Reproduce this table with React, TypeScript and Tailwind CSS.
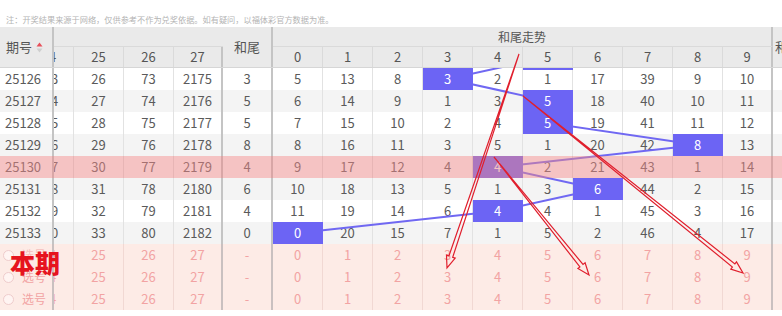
import React from 'react'

type Row = { id: string; p: string; a: number; b: number; c: number; t: number; d: number[]; hit: number }

const rows: Row[] = [
  { id: '25126', p: '3', a: 26, b: 73, c: 2175, t: 3, d: [5, 13, 8, 3, 2, 1, 17, 39, 9, 10], hit: 3 },
  { id: '25127', p: '4', a: 27, b: 74, c: 2176, t: 5, d: [6, 14, 9, 1, 3, 5, 18, 40, 10, 11], hit: 5 },
  { id: '25128', p: '5', a: 28, b: 75, c: 2177, t: 5, d: [7, 15, 10, 2, 4, 5, 19, 41, 11, 12], hit: 5 },
  { id: '25129', p: '6', a: 29, b: 76, c: 2178, t: 8, d: [8, 16, 11, 3, 5, 1, 20, 42, 8, 13], hit: 8 },
  { id: '25130', p: '7', a: 30, b: 77, c: 2179, t: 4, d: [9, 17, 12, 4, 4, 2, 21, 43, 1, 14], hit: 4 },
  { id: '25131', p: '8', a: 31, b: 78, c: 2180, t: 6, d: [10, 18, 13, 5, 1, 3, 6, 44, 2, 15], hit: 6 },
  { id: '25132', p: '9', a: 32, b: 79, c: 2181, t: 4, d: [11, 19, 14, 6, 4, 4, 1, 45, 3, 16], hit: 4 },
  { id: '25133', p: '0', a: 33, b: 80, c: 2182, t: 0, d: [0, 20, 15, 7, 1, 5, 2, 46, 4, 17], hit: 0 },
]

const digits = [0, 1, 2, 3, 4, 5, 6, 7, 8, 9]

// trend line: previous draw (hidden under header) then each hit cell centre
const trend = [[548, -11], ...rows.map((r, i) => [298 + r.hit * 50, 11 + i * 22])]
  .map(([x, y]) => `${x},${y}`)
  .join(' ')

// hand-drawn annotation arrows, page coordinates
function arrowPts(sx: number, sy: number, tx: number, ty: number) {
  const dx = tx - sx
  const dy = ty - sy
  const len = Math.hypot(dx, dy)
  const ux = dx / len
  const uy = dy / len
  const nx = -uy
  const ny = ux
  const L = 12
  const H = 4.6
  const h = 2
  const bx = tx - ux * L
  const by = ty - uy * L
  const p = [
    [sx, sy],
    [bx + nx * h, by + ny * h],
    [bx + nx * H, by + ny * H],
    [tx, ty],
    [bx - nx * H, by - ny * H],
    [bx - nx * h, by - ny * h],
  ]
  return p.map(([x, y]) => `${x.toFixed(1)},${y.toFixed(1)}`).join(' ')
}

const arrows = [
  [519, 54, 447, 268],
  [494, 157, 589, 275],
  [523, 96, 743, 273],
]

const cell = 'w-[50px] shrink-0 border-r flex items-center justify-center'

function DataRow({ r, i }: { r: Row; i: number }) {
  const bg = i % 2 === 0 ? 'bg-white' : 'bg-[#f4f4f4]'
  return (
    <div className={`flex h-[22px] ${bg} text-[13px] text-[#5a5a5a]`}>
      <div className="w-[54px] shrink-0 border-r-2 border-[#c4c4c4] pl-[5px] flex items-center">{r.id}</div>
      <div className="w-[20px] shrink-0 border-r border-[#e2e2e2] overflow-hidden flex items-center">
        <span className="-ml-[3px]">{r.p}</span>
      </div>
      <div className={`${cell} border-[#e2e2e2]`}>{r.a}</div>
      <div className={`${cell} border-[#e2e2e2]`}>{r.b}</div>
      <div className="w-[49px] shrink-0 border-r-2 border-[#c4c4c4] flex items-center justify-center">{r.c}</div>
      <div className="w-[50px] shrink-0 border-r-2 border-[#c4c4c4] flex items-center justify-center">{r.t}</div>
      {r.d.map((v, k) =>
        k === r.hit ? (
          <div key={k} className={`${cell} relative z-20 bg-[#6c64f4] border-[#6c64f4] text-white`}>
            {v}
          </div>
        ) : (
          <div key={k} className={`${cell} ${k === 9 ? 'border-r-2 border-[#c4c4c4]' : 'border-[#e2e2e2]'}`}>
            {v}
          </div>
        )
      )}
      <div className="w-[40px] shrink-0" />
    </div>
  )
}

function PickRow({ hideLabel }: { hideLabel?: boolean }) {
  return (
    <div className="flex h-[22px] bg-[#fdebe6] text-[13px] text-[#f2a3a3]">
      <div className="w-[54px] shrink-0 border-r-2 border-[#c9c0c0] pl-[3px] flex items-center gap-[8px]">
        <span className="w-[11px] h-[11px] rounded-full border border-[#efcccc] bg-[#fff4f2]" />
        <span className={`text-[12px] ${hideLabel ? 'opacity-60' : ''}`}>选号</span>
      </div>
      <div className="w-[20px] shrink-0 border-r border-[#f1d8d3] overflow-hidden flex items-center">
        <span className="-ml-[5px]">4</span>
      </div>
      <div className={`${cell} border-[#f1d8d3]`}>25</div>
      <div className={`${cell} border-[#f1d8d3]`}>26</div>
      <div className="w-[49px] shrink-0 border-r-2 border-[#c9c0c0] flex items-center justify-center">27</div>
      <div className="w-[50px] shrink-0 border-r-2 border-[#c9c0c0] flex items-center justify-center">-</div>
      {digits.map(k => (
        <div key={k} className={`${cell} ${k === 9 ? 'border-r-2 border-[#c9c0c0]' : 'border-[#f1d8d3]'}`}>
          {k}
        </div>
      ))}
      <div className="w-[40px] shrink-0" />
    </div>
  )
}

export default function App() {
  return (
    <div className="relative w-[782px] h-[316px] overflow-hidden bg-white font-['Noto_Sans_CJK_SC','Noto_Sans',sans-serif]">
      <div className="h-[27px] pt-[14px] pl-[6px] text-[8.2px] leading-[10px] text-[#b4b4b4] whitespace-nowrap">
        注：开奖结果来源于网络，仅供参考不作为兑奖依据。如有疑问，以福体彩官方数据为准。
      </div>

      {/* header */}
      <div className="flex h-[41px] bg-[#eaeaea] border-b border-[#d6d6d6] text-[13px] text-[#555]">
        <div className="w-[54px] shrink-0 border-r-2 border-[#c4c4c4] pl-[6px] flex items-center gap-[4px]">
          期号
          <svg width="7" height="11" viewBox="0 0 7 11">
            <path d="M3.5 0.5 L6.5 4.5 L0.5 4.5 Z" fill="#e8505a" />
            <path d="M3.5 10.5 L6.5 6.5 L0.5 6.5 Z" fill="#cfcfcf" />
          </svg>
        </div>
        <div className="flex flex-col shrink-0">
          <div className="h-[20px] border-b border-[#dadada]" />
          <div className="flex flex-1">
            <div className="w-[20px] shrink-0 border-r border-[#dadada] overflow-hidden flex items-center">
              <span className="-ml-[5px]">4</span>
            </div>
            <div className={`${cell} border-[#dadada]`}>25</div>
            <div className={`${cell} border-[#dadada]`}>26</div>
            <div className="w-[49px] shrink-0 border-r-2 border-[#c4c4c4] flex items-center justify-center">27</div>
          </div>
        </div>
        <div className="w-[50px] shrink-0 border-r-2 border-[#c4c4c4] flex items-center justify-center">和尾</div>
        <div className="flex flex-col shrink-0">
          <div className="h-[20px] border-b border-[#dadada] border-r-2 border-r-[#c4c4c4] flex items-center justify-center text-[12px]">
            和尾走势
          </div>
          <div className="flex flex-1">
            {digits.map(k => (
              <div key={k} className={`${cell} ${k === 9 ? 'border-r-2 border-[#c4c4c4]' : 'border-[#dadada]'}`}>
                {k}
              </div>
            ))}
          </div>
        </div>
        <div className="w-[40px] shrink-0 pl-[2px] flex items-center whitespace-nowrap">和尾振幅</div>
      </div>

      {/* body */}
      <div className="relative">
        {rows.map((r, i) => (
          <DataRow key={r.id} r={r} i={i} />
        ))}
        <PickRow hideLabel />
        <PickRow />
        <PickRow />

        <svg className="absolute left-0 top-0 z-10" width="782" height="176">
          <rect x="523" y="0" width="50" height="2" fill="#6c64f4" />
          <polyline points={trend} fill="none" stroke="#7068f2" strokeWidth="2" />
        </svg>
        <div className="absolute left-0 right-0 top-[88px] h-[22px] z-30 bg-[rgba(235,135,135,0.5)]" />
      </div>

      <svg className="absolute left-0 top-0 z-40 pointer-events-none" width="782" height="316">
        {arrows.map(([sx, sy, tx, ty], i) => (
          <polygon
            key={i}
            points={arrowPts(sx, sy, tx, ty)}
            fill="none"
            stroke="#e01f2d"
            strokeWidth="1.2"
            strokeLinejoin="miter"
          />
        ))}
      </svg>

      <div className="absolute left-[10px] top-[246px] z-50 text-[25px] leading-[32px] font-black text-[#e6141e]">
        本期
      </div>
    </div>
  )
}
